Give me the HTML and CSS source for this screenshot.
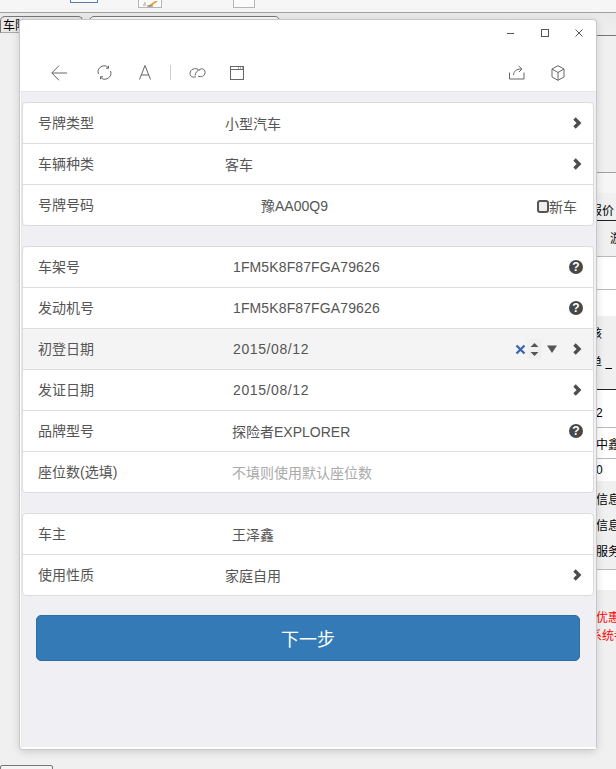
FILE: index.html
```html
<!DOCTYPE html>
<html lang="zh">
<head>
<meta charset="utf-8">
<title>车险</title>
<link rel="stylesheet" href="styles.css">
</head>
<body>
<div class="desk">
  <div class="desk-top">
    <span class="tb tb-a"></span><span class="tb tb-b"><svg class="tb-pic" width="16" height="6" viewBox="0 0 16 6"><path d="M1 4h3M2 2h2" stroke="#999"/><path d="M6 5l7-5h3l-8 6z" fill="#e0a040"/><path d="M5 5h6" stroke="#777"/></svg></span><span class="tb tb-c"></span>
  </div>
  <div class="tabs"><span class="tab tab-a">车险</span><span class="tab tab-b"></span></div>
  <div class="side">
    <div class="band b-36"></div>
    <div class="band b-21 pale"></div>
    <div class="band b-28 dark-line low"><span class="cut">报价</span></div>
    <div class="band b-28 btxt"><span class="s-box"></span><span>游</span></div>
    <div class="band b-8 soft-line"></div>
    <div class="band b-33 white soft-line"></div>
    <div class="band b-26 white"></div>
    <div class="band b-74 dark-line stack"><span class="cut">核</span><span class="cut">单 <u class="under">&nbsp;&nbsp;</u></span></div>
    <div class="band b-38 white soft-line"><span class="end">2</span></div>
    <div class="band b-31 white soft-line"><span>中鑫</span></div>
    <div class="band b-22 white"><span>0</span></div>
    <div class="band b-89 soft-line stack2"><span>信息</span><span>信息</span><span>服务</span></div>
    <div class="band b-20 white"></div>
    <div class="band reds"><span class="red">优惠</span><span class="red cut">系统参</span></div>
  </div>
  <div class="bottom-tab"></div>
</div>

<section class="win">
  <div class="titlebar">
    <svg class="ic" width="12" height="12" viewBox="0 0 12 12"><path d="M2 6.500h7" stroke="#555" fill="none"/></svg>
    <svg class="ic" width="12" height="12" viewBox="0 0 12 12"><rect x="2.500" y="2.500" width="7" height="7" stroke="#555" fill="none"/></svg>
    <svg class="ic" width="12" height="12" viewBox="0 0 12 12"><path d="M2.500 2.500l7 7M9.500 2.500l-7 7" stroke="#555" fill="none"/></svg>
  </div>
  <div class="toolbar">
    <svg class="t-back" width="16" height="16" viewBox="0 0 16 16"><path d="M8 .7L.8 8l7.200 7.300M.8 8H16" stroke="#666" fill="none"/></svg>
    <svg class="t-ref" width="15" height="15" viewBox="0 0 15 15"><path d="M1.500 9A6 6 0 0 1 11.500 2.800M13.500 6A6 6 0 0 1 3.500 12.200M11.500 .8v2.500H9M3.500 14.200v-2.500H6" stroke="#666" fill="none"/></svg>
    <svg class="t-a" width="12" height="15" viewBox="0 0 12 15"><path d="M.5 14.500L6 .5l5.500 14M2.200 10h7.600" stroke="#666" fill="none"/></svg>
    <span class="t-sep"></span>
    <svg class="t-link" width="17" height="12" viewBox="0 0 17 12"><path d="M9 2.500C6.500.5 1 2 1 6.500c0 3.500 4 4.500 6 3M6 8.500C6.500 5.500 8.500 3 11 2.500M10 3.500C12 .5 16 1.500 16 5.500c0 4-4.500 5-7 3.500" stroke="#666" fill="none"/></svg>
    <svg class="t-win" width="14" height="14" viewBox="0 0 14 14"><rect x=".5" y=".5" width="13" height="13" stroke="#666" fill="none"/><path d="M.5 3.500h13" stroke="#666"/><path d="M8 2h1M10 2h1M12 2h1" stroke="#666"/></svg>
    <span class="grow"></span>
    <svg class="t-share" width="16" height="15" viewBox="0 0 16 15"><path d="M.5 7.500v6.500h14.500V7.500M4.500 10C5 6 7 4 12.500 4M9.500 1l3.500 3-3 3" stroke="#666" fill="none"/></svg>
    <svg class="t-cube" width="14" height="16" viewBox="0 0 14 16"><path d="M7 .7l6 3.300v8l-6 3.300-6-3.300V4zM1 4l6 3.500L13 4M7 7.500v7.800" stroke="#666" fill="none"/></svg>
  </div>
  <main class="content">
    <div class="card">
      <div class="row"><span class="lbl">号牌类型</span><span class="val v1">小型汽车</span><svg class="chev" width="10" height="12" viewBox="0 0 10 12"><path d="M2.500 1.500L7 6l-4.500 4.500" stroke="#4d4d4d" stroke-width="3.400" fill="none"/></svg></div>
      <div class="row"><span class="lbl">车辆种类</span><span class="val v1">客车</span><svg class="chev" width="10" height="12" viewBox="0 0 10 12"><path d="M2.500 1.500L7 6l-4.500 4.500" stroke="#4d4d4d" stroke-width="3.400" fill="none"/></svg></div>
      <div class="row"><span class="lbl">号牌号码</span><span class="val v2">豫AA00Q9</span><span class="newcar"><span class="check"></span>新车</span></div>
    </div>
    <div class="card">
      <div class="row"><span class="lbl">车架号</span><span class="val v3 ids">1FM5K8F87FGA79626</span><span class="help">?</span></div>
      <div class="row"><span class="lbl">发动机号</span><span class="val v3 ids">1FM5K8F87FGA79626</span><span class="help">?</span></div>
      <div class="row row-on"><span class="lbl">初登日期</span><span class="val v3 date">2015/08/12</span>
        <span class="date-ctl">
          <svg width="11" height="11" viewBox="0 0 11 11"><path d="M1.500 1.500l8 8M9.500 1.500l-8 8" stroke="#3b68ad" stroke-width="2.400" fill="none"/></svg>
          <svg class="spin" width="15" height="20" viewBox="0 0 15 20"><rect width="15" height="20" fill="#f0f0f0"/><path d="M7.500 4l4 4h-8zM3.500 13h8l-4 4z" fill="#555"/></svg>
          <svg width="10" height="8" viewBox="0 0 10 8"><path d="M0 .5h10L5 8z" fill="#555"/></svg>
        </span>
        <svg class="chev" width="10" height="12" viewBox="0 0 10 12"><path d="M2.500 1.500L7 6l-4.500 4.500" stroke="#4d4d4d" stroke-width="3.400" fill="none"/></svg></div>
      <div class="row"><span class="lbl">发证日期</span><span class="val v3 date">2015/08/12</span><svg class="chev" width="10" height="12" viewBox="0 0 10 12"><path d="M2.500 1.500L7 6l-4.500 4.500" stroke="#4d4d4d" stroke-width="3.400" fill="none"/></svg></div>
      <div class="row"><span class="lbl">品牌型号</span><span class="val v4">探险者EXPLORER</span><span class="help">?</span></div>
      <div class="row"><span class="lbl">座位数(选填)</span><span class="val v4 ph">不填则使用默认座位数</span></div>
    </div>
    <div class="card">
      <div class="row"><span class="lbl">车主</span><span class="val v4">王泽鑫</span></div>
      <div class="row"><span class="lbl">使用性质</span><span class="val v1">家庭自用</span><svg class="chev" width="10" height="12" viewBox="0 0 10 12"><path d="M2.500 1.500L7 6l-4.500 4.500" stroke="#4d4d4d" stroke-width="3.400" fill="none"/></svg></div>
    </div>
    <button class="next">下一步</button>
  </main>
</section>
</body>
</html>
```
FILE: styles.css
```css
* { box-sizing: border-box; }
html, body { margin: 0; height: 100%; overflow: hidden; }
body { background: #f0f0f0; font-family: "Liberation Sans", "Noto Sans CJK SC", sans-serif; }
.desk { position: absolute; inset: 0; background: linear-gradient(#e6e6e6, #f0f0f0 40px); overflow: hidden; }
.desk-top { height: 13px; background: #f6f6f6; border-bottom: 1px solid #a0a0a0; }
.tb { position: absolute; top: -8px; background: #fbfbfb; border: 1px solid #b5b5b5; overflow: hidden; }
.tb-a { left: 70px; width: 28px; height: 11px; border-color: #5a7ba8; }
.tb-b { left: 138px; width: 24px; height: 16px; }
.tb-c { left: 233px; width: 22px; height: 16px; }
.tb-pic { display: block; margin: 8px 0 0 3px; }
.tabs { position: absolute; top: 16px; left: 0; right: 0; height: 20px; }
.tab { position: absolute; top: 0; border: 1px solid #777; border-radius: 5px 5px 0 0; font-size: 12px; line-height: 19px; color: #000; }
.tab-a { left: 0; width: 83px; padding-left: 2px; background: #e8e8e8; height: 17px; border-bottom-color: #aaa; }
.tab-b { left: 89px; width: 191px; height: 20px; background: #fafafa; }
.side { position: absolute; left: 596px; right: 0; top: 35px; bottom: 0; font-size: 12px; color: #000; display: flex; flex-direction: column; border-top: 1px solid #777; }
.band { flex: none; display: flex; align-items: center; white-space: nowrap; }
.b-36 { height: 137px; border-bottom: 1px solid #a0a0a0; }
.b-21 { height: 20px; }
.b-28 { height: 28px; }
.b-8 { height: 8px; }
.b-33 { height: 33px; }
.b-26 { height: 26px; }
.b-74 { height: 74px; }
.b-38 { height: 38px; }
.b-31 { height: 31px; }
.b-22 { height: 22px; }
.b-89 { height: 89px; }
.b-20 { height: 20px; }
.pale { background: #f6f6f6; }
.white { background: #fff; }
.dark-line { border-bottom: 1px solid #222; }
.soft-line { border-bottom: 1px solid #bbb; }
.low { padding-top: 6px; }
.btxt { gap: 13px; padding-top: 5px; }
.s-box { display: block; width: 6px; height: 20px; background: #fff; border: 1px solid #ccc; border-left: 0; border-radius: 0 2px 2px 0; }
.cut { margin-left: -6px; }
.stack { flex-direction: column; align-items: flex-start; gap: 12px; padding-top: 8px; }
.stack2 { flex-direction: column; align-items: flex-start; gap: 9px; padding-top: 9px; }
.under { text-decoration: underline; }
.end { padding-top: 9px; }
.reds { flex-direction: column; align-items: flex-start; margin-top: 19px; gap: 0; line-height: 18px; }
.red { color: #f00; }
.bottom-tab { position: absolute; left: 0; top: 765px; width: 53px; height: 8px; border: 1px solid #777; border-radius: 2px 2px 0 0; background: #f4f4f4; }
.win { position: absolute; left: 20px; top: 20px; width: 576px; height: 729px; background: #fff; border-radius: 3px; box-shadow: 0 0 0 1px #c8c8c8, 0 2px 10px rgba(0,0,0,.18); display: flex; flex-direction: column; }
.titlebar { height: 26px; display: flex; justify-content: flex-end; align-items: center; gap: 22px; padding: 0 11px 0 0; flex: none; }
.ic { display: block; }
.toolbar { height: 46px; flex: none; display: flex; align-items: center; padding: 8px 31px 0 31px; border-bottom: 1px solid #e6e6e6; }
.grow { flex: 1; }
.t-back { margin-right: 30px; }
.t-ref { margin-right: 27px; }
.t-a { margin-right: 19px; }
.t-sep { width: 1px; height: 15px; background: #ccc; margin-right: 18px; }
.t-link { margin-right: 24px; }
.t-share { margin-right: 26px; }
.content { flex: 1; background: #efeff4; padding: 10px 2px 0 0; margin-left: 1px; border-left: 1px solid #e8e8e8; border-bottom: 2px solid #fff; display: flex; flex-direction: column; gap: 20px; }
.card { background: #fff; border: 1px solid #dcdcdc; border-radius: 4px; }
.row { height: 41px; display: flex; align-items: center; padding: 0 11px 0 15px; border-top: 1px solid #dddddd; font-size: 14px; color: #555; }
.row:first-child { border-top: 0; height: 40px; }
.row-on { background: #f4f4f4; }
.lbl { width: 187px; flex: none; padding-bottom: 2px; }
.val { flex: 1; white-space: nowrap; }
.v1 { padding-left: 0; }
.v2 { padding-left: 36px; }
.v3 { padding-left: 8px; }
.v4 { padding-left: 7px; }
.ids { letter-spacing: .12px; }
.date { letter-spacing: .6px; }
.ph { color: #aaa; }
.chev { display: block; }
.help { width: 14px; height: 14px; border-radius: 50%; background: #484848; color: #fff; font: bold 12px/14px "Liberation Sans", sans-serif; text-align: center; margin-right: -1px; }
.newcar { display: flex; align-items: center; margin: 2px 5px 0 0; }
.check { width: 12px; height: 13px; border: 2px solid #555; border-radius: 3px; background: #eee; }
.date-ctl { display: flex; align-items: center; margin-right: 15px; }
.spin { margin: 0 5px 0 1px; }
.next { height: 46px; margin: -1px 14px 0; background: #337ab7; border: 1px solid #2e6da4; border-radius: 5px; color: #fff; font: 18px "Liberation Sans", "Noto Sans CJK SC", sans-serif; }
```
